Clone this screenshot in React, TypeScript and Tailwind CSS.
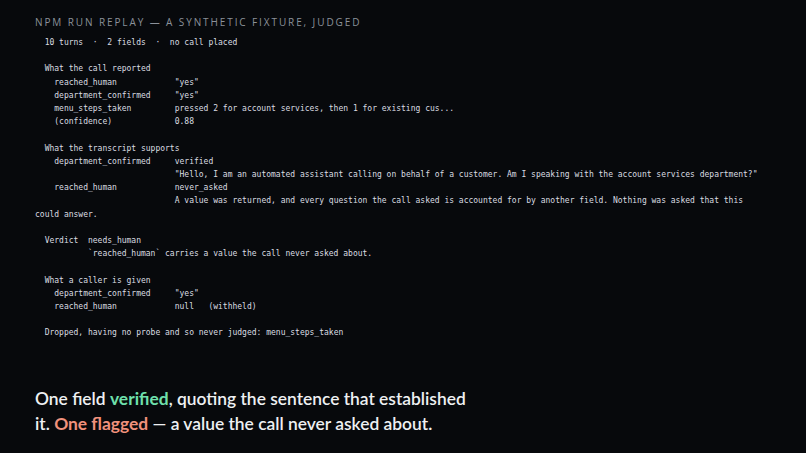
import React from "react";

const lines = `  10 turns  ·  2 fields  ·  no call placed

  What the call reported
    reached_human            "yes"
    department_confirmed     "yes"
    menu_steps_taken         pressed 2 for account services, then 1 for existing cus...
    (confidence)             0.88

  What the transcript supports
    department_confirmed     verified
                             "Hello, I am an automated assistant calling on behalf of a customer. Am I speaking with the account services department?"
    reached_human            never_asked
                             A value was returned, and every question the call asked is accounted for by another field. Nothing was asked that this could answer.

  Verdict  needs_human
           \`reached_human\` carries a value the call never asked about.

  What a caller is given
    department_confirmed     "yes"
    reached_human            null   (withheld)

  Dropped, having no probe and so never judged: menu_steps_taken`;

export default function App() {
  return (
    <div className="w-[806px] h-[453px] bg-[#07090c] px-[35px] pt-[15px] overflow-hidden flex flex-col">
      <div
        className="text-[10px] leading-[14px] tracking-[0.19em] text-[#8b9199] uppercase"
        style={{ fontFamily: '"Open Sans", "Noto Sans", sans-serif' }}
      >
        NPM RUN REPLAY — A SYNTHETIC FIXTURE, JUDGED
      </div>
      <div
        className="mt-[7px] whitespace-pre-wrap text-[8px] leading-[13.2px] text-[#dadde1]"
        style={{ fontFamily: '"DejaVu Sans Mono", "Liberation Mono", monospace' }}
      >
        {lines}
      </div>
      <div
        className="mt-[46px] w-[440px] text-[17.4px] leading-[25px] font-semibold text-[#eef0f2]"
        style={{ fontFamily: 'Lato, "Noto Sans", sans-serif' }}
      >
        One field <span className="font-bold text-[#6fe0ac]">verified</span>, quoting the sentence that established it.{" "}
        <span className="font-bold text-[#f0917c]">One flagged</span> — a value the call never asked about.
      </div>
    </div>
  );
}
